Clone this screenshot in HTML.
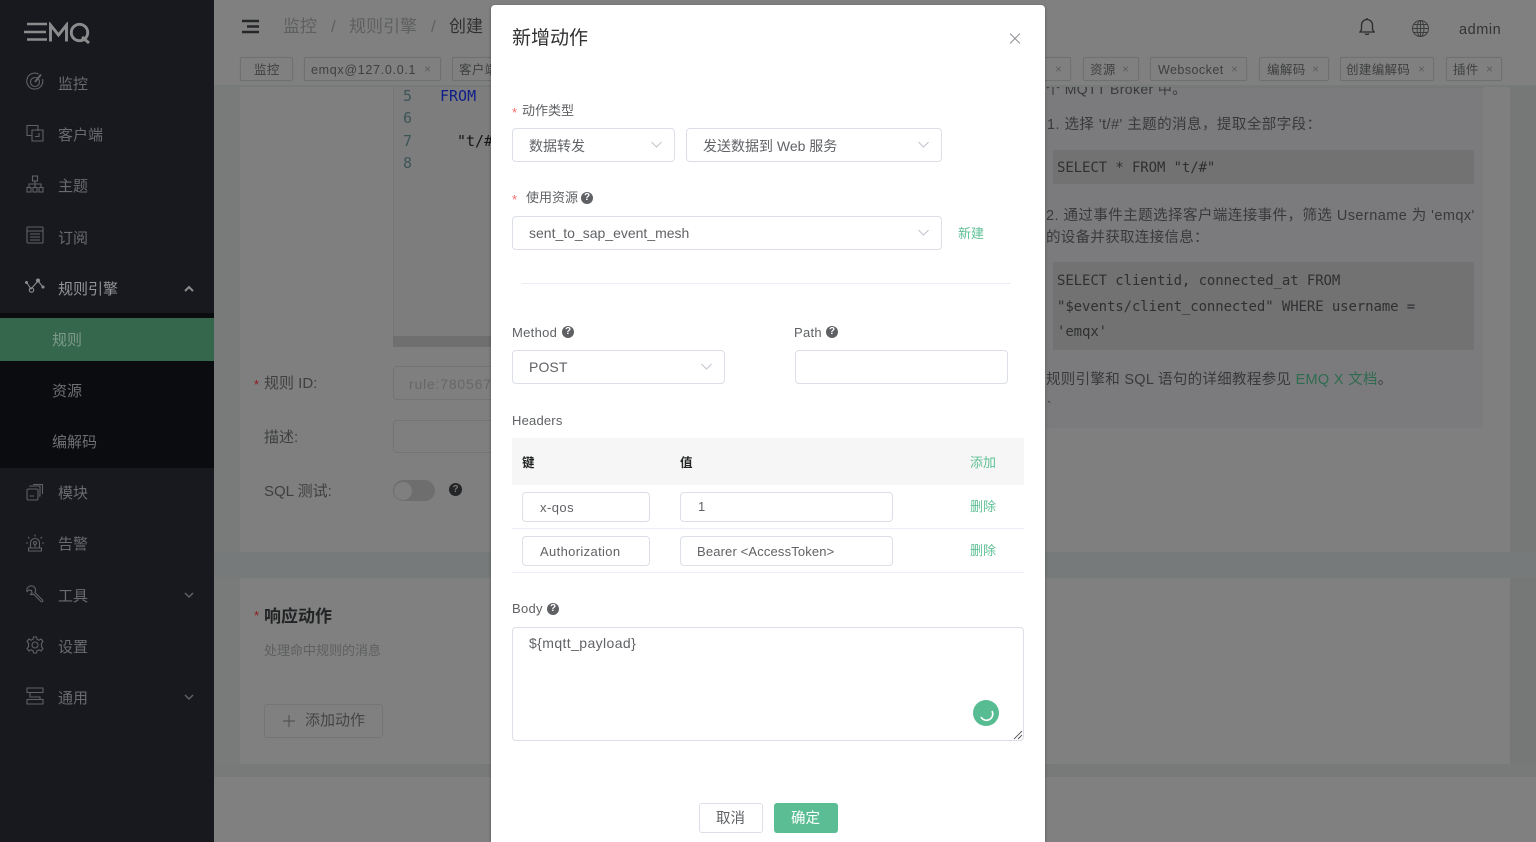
<!DOCTYPE html>
<html lang="zh-CN">
<head>
<meta charset="utf-8">
<title>EMQ X</title>
<style>
html,body{margin:0;padding:0;width:1536px;height:842px;overflow:hidden;background:#808080}
body{position:relative;font-family:"Liberation Sans","Noto Sans CJK SC",sans-serif;-webkit-font-smoothing:antialiased}
.b,.t,svg.i{position:absolute}
.b{box-sizing:border-box}
.t{white-space:pre;line-height:20px}
.m{font-family:"DejaVu Sans Mono","Liberation Mono",monospace}
.side{font-size:15px;color:#696b6e;left:58px}
.sub{font-size:15px;color:#6e6f71;left:52px}
.tab{top:57px;height:24px;border:1px solid #6f7071;border-radius:2px;background:#808080;box-shadow:0 0 1px #777}
.tt{top:60px;font-size:12.5px;color:#3e3f40;letter-spacing:.35px}
.tx{top:59px;font-size:12px;color:#5c5d5e}
.lab{font-size:13px;color:#5f6164;letter-spacing:.3px}
.inp{border:1px solid #dcdfe6;border-radius:4px;background:#fff}
.val{font-size:14px;color:#606266;letter-spacing:0}
.green{color:#5fc096;font-size:13px}
.q{position:absolute;width:12px;height:12px;border-radius:50%;background:#5e6063;color:#fff;font-size:10px;line-height:12px;text-align:center;font-weight:bold}
svg.i{fill:none;stroke:#5f6164;stroke-width:1.1}
.doc{font-size:14.5px;color:#38393a;letter-spacing:.3px}
.code{font-size:14px;color:#2f3031;letter-spacing:-.1px}
.ln{left:403px;font-size:15px;color:#3d5558}
</style>
</head>
<body>

<!-- sidebar -->
<div class="b" style="left:0;top:0;width:214px;height:842px;background:#17191f"></div>
<div class="b" style="left:0;top:313px;width:214px;height:155px;background:#0b0c10"></div>
<div class="b" style="left:0;top:318px;width:214px;height:43px;background:#35674c"></div>

<!-- logo -->
<svg class="i" style="left:24px;top:22px;stroke:#8b8c8d;stroke-width:2.6" width="70" height="22" viewBox="0 0 70 22">
<path d="M3 2H23M0 10H22M3 17.500H23"/>
<path d="M26.500 19.500V3L34.500 13 42.500 3V19.500" stroke-width="2.900"/>
<circle cx="55.500" cy="10.500" r="8.200" stroke-width="2.900"/>
<path d="M58 15L65 21" stroke-width="2.900"/>
</svg>

<!-- sidebar icons -->
<svg class="i" style="left:26px;top:72px" width="18" height="18" viewBox="0 0 18 18"><path d="M12.500 2A8 8 0 1 0 16.500 7"/><circle cx="9" cy="10" r="4.500"/><path d="M9 10L15 2.500" stroke-width="2"/></svg>
<svg class="i" style="left:26px;top:124px" width="18" height="18" viewBox="0 0 18 18"><path d="M12 7V1.500H1V11.500H6"/><path d="M6 6H17V17H6Z"/><path d="M9 12.500H13V9"/></svg>
<svg class="i" style="left:26px;top:175px" width="18" height="18" viewBox="0 0 18 18"><rect x="6.500" y="1" width="5" height="5"/><rect x="1" y="12.500" width="4" height="4.500"/><rect x="7" y="12.500" width="4" height="4.500"/><rect x="13" y="12.500" width="4" height="4.500"/><path d="M3 12.500V9H15V12.500M9 6V12.500"/></svg>
<svg class="i" style="left:26px;top:226px" width="18" height="18" viewBox="0 0 18 18"><rect x="1" y="1" width="16" height="16" rx="1"/><path d="M1 5H17M4 8H14M4 11H14M4 14H14"/></svg>
<svg class="i" style="left:25px;top:278px;stroke:#8b8c8d" width="20" height="16" viewBox="0 0 20 16"><path d="M2 5L6 11 13 3 18 9"/><circle cx="6.500" cy="12" r="2.200"/><circle cx="13" cy="2.500" r="1.500" fill="#8b8c8d"/><circle cx="1.500" cy="4.500" r="1" fill="#8b8c8d"/><circle cx="18" cy="9" r="1" fill="#8b8c8d"/></svg>
<svg class="i" style="left:26px;top:483px" width="18" height="18" viewBox="0 0 18 18"><rect x="1" y="6" width="11" height="11" rx="1.500"/><path d="M4 4V3H14V13H13M7 1.500H16.500V11M3.500 13H8"/></svg>
<svg class="i" style="left:26px;top:534px" width="18" height="19" viewBox="0 0 18 19"><path d="M4.500 14V9A4.500 4.500 0 0 1 13.500 9V14"/><path d="M2.500 14H15.500V17H2.500Z"/><circle cx="9" cy="9" r="1.500"/><path d="M9 10.500V13M9 0.500V2.500M2 3L3.500 4.500M16 3L14.500 4.500M0 9H2M16 9H18"/></svg>
<svg class="i" style="left:26px;top:585px" width="18" height="18" viewBox="0 0 18 18"><path d="M6.500 1A4.500 4.500 0 0 0 1 6.500L3 5 5.500 5.500 6 8 4.500 9.500A4.500 4.500 0 0 0 7.500 9L15 16.500C16 17.500 17.500 16 16.500 15L9 7.500A4.500 4.500 0 0 0 6.500 1Z"/></svg>
<svg class="i" style="left:26px;top:636px" width="18" height="18" viewBox="0 0 18 18"><circle cx="9" cy="9" r="3"/><path d="M7.500 1H10.500L11 3.200 13 4.200 15 3 17 5.500 15.500 7.200V10.800L17 12.500 15 15 13 13.800 11 14.800 10.500 17H7.500L7 14.800 5 13.800 3 15 1 12.500 2.500 10.800V7.200L1 5.500 3 3 5 4.200 7 3.200Z"/></svg>
<svg class="i" style="left:26px;top:687px" width="18" height="18" viewBox="0 0 18 18"><path d="M1 1H17V5.500H1ZM1 12.500H17V17H1ZM4 5.500V10H14V12.500" /></svg>

<div class="t side" style="top:75px">监控</div>
<div class="t side" style="top:126px">客户端</div>
<div class="t side" style="top:177px">主题</div>
<div class="t side" style="top:229px">订阅</div>
<div class="t side" style="top:280px;color:#949596">规则引擎</div>
<div class="t sub" style="top:331px;color:#7f9a8b">规则</div>
<div class="t sub" style="top:382px">资源</div>
<div class="t sub" style="top:433px">编解码</div>
<div class="t side" style="top:484px">模块</div>
<div class="t side" style="top:535px">告警</div>
<div class="t side" style="top:587px">工具</div>
<div class="t side" style="top:638px">设置</div>
<div class="t side" style="top:689px">通用</div>
<svg class="i" style="left:184px;top:285px;stroke:#8b8c8d;stroke-width:2" width="10" height="7" viewBox="0 0 10 7"><path d="M1 6L5 2 9 6"/></svg>
<svg class="i" style="left:184px;top:592px;stroke-width:1.500" width="10" height="7" viewBox="0 0 10 7"><path d="M1 1L5 5 9 1"/></svg>
<svg class="i" style="left:184px;top:694px;stroke-width:1.500" width="10" height="7" viewBox="0 0 10 7"><path d="M1 1L5 5 9 1"/></svg>

<!-- background page -->
<div class="b" style="left:214px;top:87px;width:26px;height:678px;background:#797b7b"></div>
<div class="b" style="left:1510px;top:87px;width:26px;height:678px;background:#767878"></div>
<div class="b" style="left:240px;top:87px;width:1270px;height:465px;background:#7f7f7f"></div>
<div class="b" style="left:214px;top:552px;width:1322px;height:26px;background:#767a7a"></div>
<div class="b" style="left:240px;top:578px;width:1270px;height:186px;background:#808080"></div>
<div class="b" style="left:214px;top:764px;width:1322px;height:13px;background:#787979"></div>
<div class="b" style="left:214px;top:85px;width:1322px;height:2px;background:#777a7a"></div>

<!-- header -->
<svg class="i" style="left:242px;top:19px;stroke:#252628;stroke-width:2.400" width="17" height="15" viewBox="0 0 17 15"><path d="M0 2H17M5 7.500H17M0 13H17"/></svg>
<div class="t" style="left:283px;top:16px;font-size:17px;line-height:22px;color:#5e5f60">监控</div>
<div class="t" style="left:331px;top:16px;font-size:17px;line-height:22px;color:#5e5f60">/</div>
<div class="t" style="left:349px;top:16px;font-size:17px;line-height:22px;color:#5e5f60">规则引擎</div>
<div class="t" style="left:431px;top:16px;font-size:17px;line-height:22px;color:#5e5f60">/</div>
<div class="t" style="left:449px;top:16px;font-size:17px;line-height:22px;color:#2f3031">创建</div>

<svg class="i" style="left:1359px;top:18px;stroke:#2a2b2c;stroke-width:1.300" width="16" height="18" viewBox="0 0 16 18"><path d="M1 14H15L13.500 11.500V7A5.500 5.500 0 0 0 2.500 7V11.500ZM6 15.500A2.500 2.500 0 0 0 10 15.500M8 1V0"/></svg>
<svg class="i" style="left:1412px;top:20px;stroke:#3c3d3e;stroke-width:1" width="17" height="17" viewBox="0 0 17 17"><circle cx="8.500" cy="8.500" r="8"/><ellipse cx="8.500" cy="8.500" rx="3.500" ry="8"/><path d="M8.500 .5V16.500M.5 8.500H16.500M1.700 4.500H15.300M1.700 12.500H15.300"/></svg>
<div class="t" style="left:1459px;top:20px;font-size:14.500px;color:#333435;letter-spacing:.55px">admin</div>

<!-- tags -->
<div class="b tab" style="left:240px;width:53px"></div><div class="t tt" style="left:254px">监控</div>
<div class="b tab" style="left:304px;width:137px"></div><div class="t tt" style="left:311px;letter-spacing:.7px">emqx@127.0.0.1</div><div class="t tx" style="left:424px">×</div>
<div class="b tab" style="left:452px;width:50px"></div><div class="t tt" style="left:459px">客户端</div>
<div class="b tab" style="left:1030px;width:41px"></div><div class="t tx" style="left:1055px">×</div>
<div class="b tab" style="left:1083px;width:56px"></div><div class="t tt" style="left:1090px">资源</div><div class="t tx" style="left:1122px">×</div>
<div class="b tab" style="left:1150px;width:97px"></div><div class="t tt" style="left:1158px;letter-spacing:.45px">Websocket</div><div class="t tx" style="left:1231px">×</div>
<div class="b tab" style="left:1259px;width:70px"></div><div class="t tt" style="left:1267px">编解码</div><div class="t tx" style="left:1312px">×</div>
<div class="b tab" style="left:1340px;width:94px"></div><div class="t tt" style="left:1346px">创建编解码</div><div class="t tx" style="left:1418px">×</div>
<div class="b tab" style="left:1446px;width:56px"></div><div class="t tt" style="left:1453px">插件</div><div class="t tx" style="left:1486px">×</div>

<!-- left form -->
<div class="b" style="left:393px;top:87px;width:100px;height:249px;background:#7d7d7d;border-left:1px solid #747576"></div>
<div class="b" style="left:393px;top:336px;width:100px;height:11px;background:#6f6f6f"></div>
<div class="t m ln" style="top:86px">5</div>
<div class="t m ln" style="top:108px">6</div>
<div class="t m ln" style="top:131px">7</div>
<div class="t m ln" style="top:153px">8</div>
<div class="t m" style="left:440px;top:86px;font-size:15px;color:#0d1d8a">FROM</div>
<div class="t m" style="left:457px;top:131px;font-size:15px;color:#151617">"t/#"</div>

<div class="t" style="left:254px;top:375px;font-size:13px;color:#8e1a22">*</div>
<div class="t" style="left:264px;top:374px;font-size:15px;color:#3e3f40">规则 ID:</div>
<div class="t" style="left:264px;top:428px;font-size:15px;color:#3e3f40">描述:</div>
<div class="t" style="left:264px;top:482px;font-size:15px;color:#3e3f40">SQL 测试:</div>
<div class="b" style="left:393px;top:366px;width:100px;height:34px;border:1px solid #737475;border-radius:4px 0 0 4px"></div>
<div class="t" style="left:409px;top:374px;font-size:14px;color:#666768;letter-spacing:.8px">rule:780567</div>
<div class="b" style="left:393px;top:420px;width:100px;height:33px;border:1px solid #737475;border-radius:4px 0 0 4px"></div>
<div class="b" style="left:393px;top:480px;width:42px;height:21px;border-radius:11px;background:#6e6e6e"></div>
<div class="b" style="left:394px;top:482px;width:18px;height:18px;border-radius:50%;background:#7f7f7f"></div>
<div class="q" style="left:449px;top:483px;width:13px;height:13px;line-height:13px;background:#242526;color:#777">?</div>

<div class="t" style="left:254px;top:606px;font-size:13px;color:#8e1a22">*</div>
<div class="t" style="left:264px;top:607px;font-size:17px;font-weight:bold;color:#222324">响应动作</div>
<div class="t" style="left:264px;top:641px;font-size:13px;color:#5e5f60">处理命中规则的消息</div>
<div class="b" style="left:264px;top:704px;width:119px;height:34px;border:1px solid #747576;border-radius:3px"></div>
<svg class="i" style="left:282px;top:714px;stroke:#535455;stroke-width:1.200" width="14" height="14" viewBox="0 0 14 14"><path d="M7 1V13M1 7H13"/></svg>
<div class="t" style="left:305px;top:711px;font-size:15px;color:#434445">添加动作</div>

<!-- right doc -->
<div class="b" style="left:1046px;top:87px;width:437px;height:341px;background:#7b7b7d"></div>
<div class="b" style="left:1046px;top:87px;width:437px;height:1px;background:#777"></div>
<div class="t" style="left:1046px;top:79px;font-size:14px;color:#38393a;letter-spacing:.4px;clip-path:inset(8px 0 0 0)">个 MQTT Broker 中。</div>
<div class="t doc" style="left:1047px;top:115px;letter-spacing:.45px">1. 选择 't/#' 主题的消息，提取全部字段：</div>
<div class="b" style="left:1053px;top:150px;width:421px;height:34px;background:#727273"></div>
<div class="t m code" style="left:1057px;top:158px">SELECT * FROM "t/#"</div>
<div class="t doc" style="left:1046px;top:206px;letter-spacing:.44px">2. 通过事件主题选择客户端连接事件，筛选 Username 为 'emqx'</div>
<div class="t doc" style="left:1046px;top:228px">的设备并获取连接信息：</div>
<div class="b" style="left:1053px;top:262px;width:421px;height:88px;background:#727273"></div>
<div class="t m code" style="left:1057px;top:271px">SELECT clientid, connected_at FROM</div>
<div class="t m code" style="left:1057px;top:297px">"$events/client_connected" WHERE username =</div>
<div class="t m code" style="left:1057px;top:322px">'emqx'</div>
<div class="t doc" style="left:1046px;top:370px">规则引擎和 SQL 语句的详细教程参见 <span style="color:#2f6b4f">EMQ X 文档</span>。</div>
<div class="t" style="left:1047px;top:396px;font-size:14px;color:#38393a">`</div>

<!-- modal -->
<div class="b" style="left:491px;top:5px;width:554px;height:850px;background:#fff;border-radius:4px;box-shadow:0 1px 3px rgba(0,0,0,.3)"></div>
<div class="t" style="left:512px;top:26px;font-size:19px;line-height:26px;color:#303133">新增动作</div>
<svg class="i" style="left:1010px;top:33px;stroke:#909399;stroke-width:1.100" width="10" height="11" viewBox="0 0 10 11"><path d="M0 .5L10 10.500M10 .5L0 10.500"/></svg>

<div class="t" style="left:512px;top:103px;font-size:13px;color:#f56c6c">*</div>
<div class="t lab" style="left:522px;top:101px;letter-spacing:0">动作类型</div>
<div class="b inp" style="left:512px;top:128px;width:163px;height:34px"></div>
<div class="t val" style="left:529px;top:136px">数据转发</div>
<svg class="i" style="left:651px;top:141px;stroke:#c0c4cc;stroke-width:1" width="11" height="7" viewBox="0 0 11 7"><path d="M.5 1L5.500 6 10.500 1"/></svg>
<div class="b inp" style="left:686px;top:128px;width:256px;height:34px"></div>
<div class="t val" style="left:703px;top:136px">发送数据到 Web 服务</div>
<svg class="i" style="left:918px;top:141px;stroke:#c0c4cc;stroke-width:1" width="11" height="7" viewBox="0 0 11 7"><path d="M.5 1L5.500 6 10.500 1"/></svg>

<div class="t" style="left:512px;top:190px;font-size:13px;color:#f56c6c">*</div>
<div class="t lab" style="left:526px;top:188px;letter-spacing:0">使用资源</div>
<div class="q" style="left:581px;top:192px">?</div>
<div class="b inp" style="left:512px;top:216px;width:430px;height:34px"></div>
<div class="t val" style="left:529px;top:223px">sent_to_sap_event_mesh</div>
<svg class="i" style="left:918px;top:229px;stroke:#c0c4cc;stroke-width:1" width="11" height="7" viewBox="0 0 11 7"><path d="M.5 1L5.500 6 10.500 1"/></svg>
<div class="t green" style="left:958px;top:224px">新建</div>
<div class="b" style="left:522px;top:283px;width:489px;height:1px;background:#ebeef5"></div>

<div class="t lab" style="left:512px;top:323px">Method</div>
<div class="q" style="left:562px;top:326px">?</div>
<div class="t lab" style="left:794px;top:323px">Path</div>
<div class="q" style="left:826px;top:326px">?</div>
<div class="b inp" style="left:512px;top:350px;width:213px;height:34px"></div>
<div class="t val" style="left:529px;top:357px;letter-spacing:.1px">POST</div>
<svg class="i" style="left:701px;top:363px;stroke:#c0c4cc;stroke-width:1" width="11" height="7" viewBox="0 0 11 7"><path d="M.5 1L5.500 6 10.500 1"/></svg>
<div class="b inp" style="left:795px;top:350px;width:213px;height:34px"></div>

<div class="t lab" style="left:512px;top:411px;letter-spacing:.2px">Headers</div>
<div class="b" style="left:512px;top:438px;width:512px;height:47px;background:#f6f6f6"></div>
<div class="t" style="left:522px;top:453px;font-size:12.500px;font-weight:bold;color:#232425">键</div>
<div class="t" style="left:680px;top:453px;font-size:12.500px;font-weight:bold;color:#232425">值</div>
<div class="t green" style="left:970px;top:453px">添加</div>
<div class="b inp" style="left:522px;top:492px;width:128px;height:30px"></div>
<div class="t" style="left:540px;top:498px;font-size:13px;color:#606266;letter-spacing:.45px">x-qos</div>
<div class="b inp" style="left:680px;top:492px;width:213px;height:30px"></div>
<div class="t" style="left:698px;top:497px;font-size:13px;color:#606266">1</div>
<div class="t green" style="left:970px;top:497px">删除</div>
<div class="b" style="left:512px;top:528px;width:512px;height:1px;background:#ebeef5"></div>
<div class="b inp" style="left:522px;top:536px;width:128px;height:30px"></div>
<div class="t" style="left:540px;top:542px;font-size:13px;color:#606266;letter-spacing:.35px">Authorization</div>
<div class="b inp" style="left:680px;top:536px;width:213px;height:30px"></div>
<div class="t" style="left:697px;top:542px;font-size:13px;color:#606266;letter-spacing:.15px">Bearer &lt;AccessToken&gt;</div>
<div class="t green" style="left:970px;top:541px">删除</div>
<div class="b" style="left:512px;top:572px;width:512px;height:1px;background:#ebeef5"></div>

<div class="t lab" style="left:512px;top:599px">Body</div>
<div class="q" style="left:547px;top:603px">?</div>
<div class="b inp" style="left:512px;top:627px;width:512px;height:114px"></div>
<div class="t val" style="left:529px;top:633px;letter-spacing:.4px">${mqtt_payload}</div>
<div class="b" style="left:973px;top:700px;width:26px;height:26px;border-radius:50%;background:#58bc92"></div>
<svg class="i" style="left:973px;top:700px;stroke:#fff;stroke-width:1.600" width="26" height="26" viewBox="0 0 26 26"><path d="M19 11A6.200 6.200 0 0 1 8 17"/></svg>
<svg class="i" style="left:1013px;top:730px;stroke:#555;stroke-width:.9" width="10" height="10" viewBox="0 0 10 10"><path d="M1 9L9 1M5 9L9 5"/></svg>

<div class="b" style="left:699px;top:803px;width:64px;height:30px;border:1px solid #dcdfe6;border-radius:3px;background:#fff"></div>
<div class="t" style="left:716px;top:809px;font-size:14.500px;color:#606266">取消</div>
<div class="b" style="left:774px;top:803px;width:64px;height:30px;border-radius:3px;background:#5bbd93"></div>
<div class="t" style="left:791px;top:809px;font-size:14.500px;color:#fff">确定</div>

</body>
</html>
